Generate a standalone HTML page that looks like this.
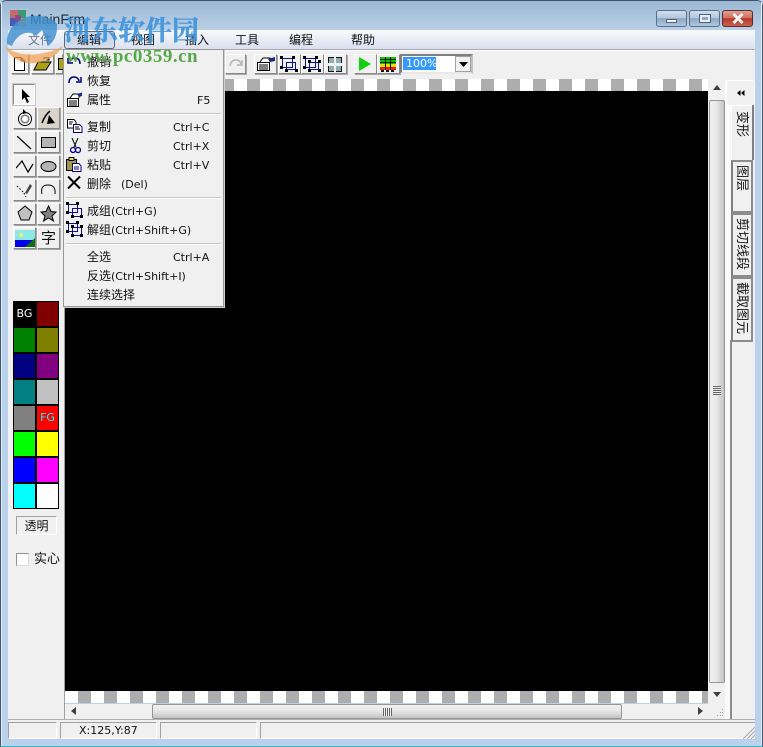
<!DOCTYPE html>
<html><head><meta charset="utf-8"><style>
html,body{margin:0;padding:0;width:763px;height:747px;overflow:hidden;background:#b9d1ea}
body{position:relative;font:12px/14px "Liberation Sans","WenQuanYi Zen Hei","Noto Sans CJK SC",sans-serif;color:#111}
div,span,svg{position:absolute;box-sizing:border-box}
i{font:11px/14px "DejaVu Sans",sans-serif}
.t{width:23px;height:22px;background:#f0f0f0;border:1px solid;border-color:#fff #8a8a8a #8a8a8a #fff;box-shadow:1px 1px 0 #a8a8a8}
.m{white-space:nowrap;line-height:14px}
.sep{left:66px;width:155px;height:2px;background:#c6c6c6;border-bottom:1px solid #fff}
.c{width:21px;height:24px;font:11px/24px "DejaVu Sans",sans-serif;text-align:center}
.tab{left:731px;width:22px;background:#f0f0f0;border:2px solid #8c8c8c;border-left-color:#808080;border-bottom-color:#8c8c8c}
.v{writing-mode:vertical-rl;text-orientation:sideways;white-space:nowrap;left:3px;line-height:14px;font-size:13px}
.st{top:722px;height:17px;background:#f0f0f0;border:1px solid;border-color:#a0a0a0 #fff #fff #a0a0a0}
</style></head><body>

<!-- window frame -->
<div style="left:0;top:0;width:763px;height:747px;background:#b9d1ea;border:1px solid #40566c;border-bottom-color:#38b4c8;border-radius:6px 6px 0 0"></div>
<div style="left:1px;top:1px;width:761px;height:29px;background:linear-gradient(#9cb8d4,#b9cfe6);border-radius:5px 5px 0 0"></div>
<div style="left:1px;top:2px;width:1px;height:744px;background:#e4eef8"></div>
<div style="left:761px;top:2px;width:1px;height:744px;background:#e4eef8"></div>

<!-- title -->
<svg style="left:10px;top:10px" width="16" height="16"><rect width="16" height="16" fill="#c46a6a"/><rect x="8" width="8" height="8" fill="#3a9a72"/><rect y="8" width="8" height="8" fill="#4a5ab0"/><rect x="8" y="8" width="8" height="8" fill="#d0a050"/><rect x="5" y="5" width="6" height="6" fill="#8a4a90"/></svg>
<div class="m" style="left:30px;top:11px;font-size:14px;color:#1a2a3a;height:16px;line-height:16px">MainFrm</div>
<div style="left:656px;top:10px;width:31px;height:17px;border:1px solid #5a6e86;border-radius:3px;background:linear-gradient(#d0deec 0,#b4c8de 45%,#8ca8c6 50%,#b0c8e0 100%)"><div style="left:9px;top:8px;width:11px;height:4px;background:#f4f4f4;border:1px solid #50627a"></div></div>
<div style="left:689px;top:10px;width:31px;height:17px;border:1px solid #5a6e86;border-radius:3px;background:linear-gradient(#d0deec 0,#b4c8de 45%,#8ca8c6 50%,#b0c8e0 100%)"><div style="left:9px;top:3px;width:12px;height:9px;background:#e8eef4;border:1px solid #50627a"><div style="left:2px;top:2px;width:6px;height:3px;background:#8fa6be;border:0"></div></div></div>
<div style="left:722px;top:10px;width:31px;height:17px;border:1px solid #5c2a30;border-radius:3px;background:linear-gradient(#e0a090 0,#d07060 45%,#b83828 50%,#c86050 100%)"><svg style="left:9px;top:2px" width="12" height="11"><path d="M1.500 1 L10.500 10 M10.500 1 L1.500 10" stroke="#f4f4f4" stroke-width="3"/></svg></div>

<!-- menu bar -->
<div style="left:8px;top:30px;width:747px;height:20px;background:linear-gradient(#f8fafd,#d8deee)"></div>
<div style="left:8px;top:49px;width:747px;height:2px;background:#a8a8b0;border-bottom:1px solid #fff"></div>
<div class="m" style="left:28px;top:33px;color:#6a7a8a">文件</div>
<div style="left:64px;top:31px;width:51px;height:18px;border:1px solid #5a6a7a;border-radius:3px;background:linear-gradient(#c4d4e8,#d4dcec)"></div>
<div class="m" style="left:77px;top:33px">编辑</div>
<div class="m" style="left:131px;top:33px">视图</div>
<div class="m" style="left:185px;top:33px">插入</div>
<div class="m" style="left:235px;top:33px">工具</div>
<div class="m" style="left:289px;top:33px">编程</div>
<div class="m" style="left:351px;top:33px">帮助</div>

<!-- toolbar -->
<div style="left:8px;top:51px;width:747px;height:28px;background:#f0f0f0"></div>
<div class="t" style="left:11px;top:54px;width:18px;height:20px"></div>
<svg style="left:13px;top:57px" width="13" height="15"><path d="M1.500 .5 H8 L11.500 4 V13.500 H1.500 Z M8 .5 V4 H11.500" fill="#fff" stroke="#000"/></svg>
<div class="t" style="left:31px;top:54px;height:20px"></div>
<svg style="left:33px;top:56px" width="20" height="16"><path d="M1 14 L5 6 H18 L13 14 Z" fill="#a8a018" stroke="#000"/><path d="M10 3 Q13 0 16 3 M16 1 V4 H13" fill="none" stroke="#000"/></svg>
<div class="t" style="left:55px;top:54px;width:8px;height:20px"></div>
<div style="left:58px;top:58px;width:5px;height:12px;background:#a8a018;border:1px solid #000;border-right:0"></div>
<div class="t" style="left:225px;top:54px;height:20px;width:21px"></div>
<svg style="left:228px;top:58px" width="16" height="12"><path d="M2 8 Q3 2 8 2 Q12 2 13 6 M14 2 V7 H9" fill="none" stroke="#b4b4b4" stroke-width="1.400"/></svg>
<div class="t" style="left:254px;top:54px;height:20px"></div>
<svg style="left:256px;top:56px" width="20" height="16"><path d="M1.500 6.500 H13.500 V14.500 H1.500 Z M3 9 H12 M3 11 H12 M3 13 H12 M4 6 L7 2 H14 V6" fill="#fff" stroke="#000"/><path d="M12 3 L19 1 V5 L14 6 Z" fill="#1a2a80"/></svg>
<div class="t" style="left:278px;top:54px;height:20px"></div>
<svg style="left:280px;top:56px" width="18" height="16"><path d="M2.500 2.500 H12.500 V11.500 H2.500 Z M6.500 6.500 H15.500 V13.500 H6.500 Z" fill="none" stroke="#101088"/><path d="M0 0h3v3H0zM12 0h3v3h-3zM0 10h3v3H0zM15 13h3v3h-3zM5 13h3v3H5z"/></svg>
<div class="t" style="left:301px;top:54px;height:20px"></div>
<svg style="left:303px;top:56px" width="19" height="16"><path d="M2.500 2.500 H12.500 V11.500 H2.500 Z M6.500 6.500 H15.500 V13.500 H6.500 Z" fill="none" stroke="#101088"/><path d="M0 0h3v3H0zM12 0h3v3h-3zM0 10h3v3H0zM15 4h3v3h-3zM15 13h3v3h-3zM5 13h3v3H5zM5 4h3v3H5z"/></svg>
<div class="t" style="left:324px;top:54px;height:20px"></div>
<svg style="left:327px;top:57px" width="16" height="15"><path d="M1 0h6v6H1zM9 0h6v6H9zM1 9h6v6H1zM9 9h6v6H9z" fill="#8cb0b0"/><path d="M1 0h1v6H1zM14 0h1v6h-1zM1 9h1v6H1zM14 9h1v6h-1zM2 0h5v1H2zM9 0h5v1H9zM2 14h5v1H2zM9 14h5v1H9z" fill="#111"/></svg>
<div class="t" style="left:354px;top:54px;height:20px"></div>
<svg style="left:359px;top:57px" width="13" height="14"><path d="M0 0 L12 7 L0 14 Z" fill="#10d010"/></svg>
<div class="t" style="left:377px;top:54px;height:20px"></div>
<svg style="left:380px;top:57px" width="16" height="15"><rect width="16" height="7" fill="#00c800"/><rect y="7" width="16" height="3" fill="#e8e000"/><rect y="10" width="16" height="3" fill="#e02020"/><path d="M1 13h3v2H1zM6 13h3v2H6zM11 13h3v2h-3zM5 0h1v13H5zM10 0h1v13h-1zM0 2h16v1H0zM0 5h16v1H0z" fill="#111"/></svg>
<div style="left:400px;top:54px;width:73px;height:20px;background:#fff;border:2px solid;border-color:#808080 #c0c0c0 #e8e8e8 #808080"></div>
<div style="left:403px;top:57px;width:33px;height:13px;background:#3399ff;color:#fff;font:11px/13px 'DejaVu Sans',sans-serif;padding-left:3px;white-space:nowrap;overflow:hidden">100%</div>
<div style="left:455px;top:56px;width:16px;height:16px;background:#f0f0f0;border:1px solid #a0a0a0"></div>
<svg style="left:459px;top:62px" width="10" height="5"><path d="M0 0H9L4.500 5Z" fill="#000"/></svg>

<!-- canvas -->
<div style="left:65px;top:79px;width:644px;height:12px;background:repeating-linear-gradient(90deg,#adadad 0 13px,#fff 13px 26px)"></div>
<div style="left:65px;top:91px;width:643px;height:600px;background:#000"></div>
<div style="left:65px;top:691px;width:644px;height:12px;background:repeating-linear-gradient(90deg,#fff 0 13px,#adadad 13px 26px)"></div>
<div style="left:708px;top:79px;width:1px;height:625px;background:#f0f0f0"></div>

<!-- vertical scrollbar -->
<div style="left:709px;top:79px;width:17px;height:641px;background:#f0f0f0"></div>
<svg style="left:713px;top:85px" width="9" height="5"><path d="M0 5H8L4 0Z" fill="#404040"/></svg>
<svg style="left:713px;top:692px" width="9" height="5"><path d="M0 0H8L4 5Z" fill="#404040"/></svg>
<div style="left:709px;top:100px;width:16px;height:583px;background:linear-gradient(90deg,#f0f0f0,#e8e8e8 45%,#c4c4c4);border:1px solid #979797;border-radius:2px"></div>
<div style="left:713px;top:386px;width:8px;height:9px;background:repeating-linear-gradient(#666 0 1px,#eee 1px 2px)"></div>

<!-- horizontal scrollbar -->
<div style="left:65px;top:704px;width:644px;height:15px;background:#f0f0f0"></div>
<svg style="left:71px;top:707px" width="5" height="9"><path d="M5 0V8L0 4Z" fill="#404040"/></svg>
<svg style="left:698px;top:707px" width="5" height="9"><path d="M0 0V8L5 4Z" fill="#404040"/></svg>
<div style="left:152px;top:704px;width:470px;height:15px;background:linear-gradient(#f0f0f0,#e8e8e8 45%,#c4c4c4);border:1px solid #979797;border-radius:2px"></div>
<div style="left:383px;top:708px;width:9px;height:8px;background:repeating-linear-gradient(90deg,#666 0 1px,#eee 1px 2px)"></div>
<svg style="left:713px;top:709px" width="11" height="9"><path d="M9 0h1v1H9zM7 3h1v1H7zM9 3h1v1H9zM4 6h1v1H4zM7 6h1v1H7zM9 6h1v1H9z" fill="#a0a0a0"/></svg>

<!-- left panel -->
<div style="left:8px;top:79px;width:57px;height:641px;background:#f0f0f0;border-right:1px solid #a0a0a0;border-bottom:1px solid #a0a0a0"></div>
<div style="left:13px;top:84px;width:22px;height:21px;background:#f6f6f6;border:1px solid;border-color:#8a8a8a #fff #fff #8a8a8a;box-shadow:0 0 0 1px #c8c8c8"></div>
<svg style="left:21px;top:89px" width="11" height="15"><path d="M1 0 L1 11 L3.500 8.500 L6 14 L8 13 L5.500 8 L9 8 Z" fill="#000"/></svg>
<div class="t" style="left:13px;top:107px"></div>
<svg style="left:16px;top:109px" width="18" height="18"><circle cx="9" cy="10" r="6.500" fill="#fff" stroke="#000"/><circle cx="9" cy="10" r="3.800" fill="#fff" stroke="#777" stroke-width="1.500"/><path d="M7 0 L11 4 L7 5 Z" fill="#000"/></svg>
<div class="t" style="left:37px;top:107px;background:#d8d4cc"></div>
<svg style="left:40px;top:109px" width="17" height="18"><path d="M2 14 Q5 6 10 2" fill="none" stroke="#000" stroke-width="1.500"/><path d="M9 6 L7 15 L15 14 Z" fill="#000"/></svg>
<div class="t" style="left:13px;top:131px"></div>
<svg style="left:17px;top:136px" width="15" height="14"><path d="M0 0 L14 13" stroke="#000" stroke-width="1.200"/></svg>
<div class="t" style="left:37px;top:131px"></div>
<div style="left:41px;top:137px;width:15px;height:11px;background:#b4b4b4;border:1px solid #000"></div>
<div class="t" style="left:13px;top:155px"></div>
<svg style="left:16px;top:160px" width="18" height="14"><path d="M0 8 L6 1 L12 12 L17 4" fill="none" stroke="#000" stroke-width="1.200"/></svg>
<div class="t" style="left:37px;top:155px"></div>
<svg style="left:40px;top:160px" width="17" height="13"><ellipse cx="8.500" cy="6.500" rx="7.500" ry="5" fill="#b4b4b4" stroke="#000"/></svg>
<div class="t" style="left:13px;top:179px"></div>
<svg style="left:16px;top:181px" width="18" height="18"><path d="M9 12 L14 3 L16 5 L11 13 Z" fill="#444"/><path d="M1 5 L8 12 M8 12 L10 16" stroke="#000" stroke-dasharray="1.500 2"/></svg>
<div class="t" style="left:37px;top:179px"></div>
<svg style="left:40px;top:183px" width="17" height="15"><path d="M2 11 Q0 2 8 2 Q16 2 15 11" fill="none" stroke="#000"/></svg>
<div class="t" style="left:13px;top:203px"></div>
<svg style="left:16px;top:205px" width="18" height="18"><path d="M9 1 L16 7 L13 15 H5 L2 7 Z" fill="#c0c0c0" stroke="#000"/></svg>
<div class="t" style="left:37px;top:203px"></div>
<svg style="left:40px;top:205px" width="17" height="17"><path d="M8.500 1 L11 6.500 L16 7 L12 11 L13.500 16 L8.500 13 L3.500 16 L5 11 L1 7 L6 6.500 Z" fill="#808080" stroke="#000"/></svg>
<div class="t" style="left:13px;top:227px"></div>
<svg style="left:15px;top:230px" width="20" height="17"><rect width="20" height="17" fill="#8ce8e8"/><rect y="10" width="20" height="7" fill="#0000e8"/><path d="M10 17 L20 8 V17 Z" fill="#107010"/><circle cx="6" cy="5" r="2" fill="#f8f060"/></svg>
<div class="t" style="left:37px;top:227px"></div>
<div class="m" style="left:41px;top:230px;font-size:15px;line-height:17px">字</div>

<!-- palette -->
<div style="left:13px;top:301px;width:46px;height:208px;background:#000"></div>
<div class="c" style="left:14px;top:302px;background:#000;color:#fff">BG</div><div class="c" style="left:37px;top:302px;background:#800000"></div>
<div class="c" style="left:14px;top:328px;background:#008000"></div><div class="c" style="left:37px;top:328px;background:#808000"></div>
<div class="c" style="left:14px;top:354px;background:#000080"></div><div class="c" style="left:37px;top:354px;background:#800080"></div>
<div class="c" style="left:14px;top:380px;background:#008080"></div><div class="c" style="left:37px;top:380px;background:#c0c0c0"></div>
<div class="c" style="left:14px;top:406px;background:#808080"></div><div class="c" style="left:37px;top:406px;background:#f00;color:#0ff">FG</div>
<div class="c" style="left:14px;top:432px;background:#0f0"></div><div class="c" style="left:37px;top:432px;background:#ff0"></div>
<div class="c" style="left:14px;top:458px;background:#00f"></div><div class="c" style="left:37px;top:458px;background:#f0f"></div>
<div class="c" style="left:14px;top:484px;background:#0ff"></div><div class="c" style="left:37px;top:484px;background:#fff"></div>

<div style="left:16px;top:516px;width:41px;height:19px;border:1px solid;border-color:#a0a0a0 #fff #fff #a0a0a0;text-align:center;line-height:18px">透明</div>
<div style="left:16px;top:553px;width:13px;height:13px;background:#fff;border:1px solid;border-color:#909090 #ddd #ddd #909090"></div>
<div class="m" style="left:34px;top:552px;font-size:13px">实心</div>

<!-- right panel -->
<div style="left:726px;top:79px;width:29px;height:641px;background:#f0f0f0"></div>
<div style="left:725px;top:79px;width:1px;height:641px;background:#fafafa"></div>
<div style="left:726px;top:80px;width:29px;height:26px;background:#f0f0f0;border:1px solid #fff"></div>
<svg style="left:737px;top:90px" width="8" height="7"><path d="M3.500 0V6L0 3ZM7.500 0V6L4 3Z" fill="#000"/></svg>
<div style="left:726px;top:106px;width:5px;height:614px;background:#fafafa"></div>
<div style="left:730px;top:340px;width:2px;height:380px;background:#8c8c8c"></div>
<div style="left:731px;top:105px;width:23px;height:55px;background:#f0f0f0;border-top:1px solid #fff;border-left:1px solid #fff"></div>
<div style="left:752px;top:105px;width:2px;height:55px;background:#808080"></div>
<div class="v" style="left:735px;top:111px">变形</div>
<div class="tab" style="top:160px;height:53px"><div class="v" style="left:2px;top:3px">图层</div></div>
<div class="tab" style="top:213px;height:64px"><div class="v" style="left:2px;top:3px">剪切线段</div></div>
<div class="tab" style="top:277px;height:65px"><div class="v" style="left:2px;top:3px">截取图元</div></div>

<!-- status bar -->
<div style="left:8px;top:719px;width:747px;height:20px;background:#f0f0f0;border-top:1px solid #b0b0b0"></div>
<div class="st" style="left:8px;width:49px"></div>
<div class="st" style="left:60px;width:97px"><span class="m" style="left:18px;top:1px;color:#111;font:11px/14px 'DejaVu Sans',sans-serif">X:125,Y:87</span></div>
<div class="st" style="left:160px;width:97px"></div>
<div class="st" style="left:260px;width:495px;border-right:0"></div>
<svg style="left:743px;top:727px" width="12" height="12"><path d="M0 12L12 0M4 12L12 4M8 12L12 8" stroke="#a8a8a8"/></svg>

<!-- dropdown menu -->
<div style="left:63px;top:49px;width:161px;height:258px;background:#f0f0f0;border:1px solid #979797;box-shadow:1px 1px 0 #d0d0d0"></div>
<svg style="left:67px;top:56px" width="16" height="10"><path d="M13 8 Q13 2 8 2 Q4 2 3 6 M1 2 V7 H6" fill="none" stroke="#000080" stroke-width="1.500"/></svg>
<svg style="left:67px;top:75px" width="15" height="10"><path d="M2 8 Q2 2 7 2 Q11 2 12 6 M14 2 V7 H9" fill="none" stroke="#000080" stroke-width="1.500"/></svg>
<svg style="left:66px;top:92px" width="17" height="15"><path d="M1.500 6.500 H12.500 V14.500 H1.500 Z M3 9 H11 M3 11 H11 M3 13 H11 M4 6 L7 2 H13 V6" fill="#fff" stroke="#000"/><path d="M11 2 L16 .5 V4 L13 5 Z" fill="#1a2a80"/></svg>
<svg style="left:67px;top:119px" width="16" height="14"><path d="M.5 .5H7L9 3V9H.5Z" fill="#fff" stroke="#000"/><path d="M6.500 5.500H12.500L15 8V13.500H6.500Z" fill="#fff" stroke="#000080"/><path d="M2 3H6M2 5H5M8 8H12M8 10H13" stroke="#000"/></svg>
<svg style="left:70px;top:138px" width="11" height="16"><path d="M2 0 L6 9 M8 0 L4 9" stroke="#000"/><circle cx="3" cy="12" r="2.500" fill="none" stroke="#000080" stroke-width="1.300"/><circle cx="8" cy="12" r="2.500" fill="none" stroke="#000080" stroke-width="1.300"/></svg>
<svg style="left:66px;top:157px" width="16" height="15"><rect x=".5" y="2.500" width="10" height="11" fill="#a09850" stroke="#000"/><rect x="3" y=".5" width="5" height="3" fill="#e0e060" stroke="#000"/><path d="M6.500 6.500H13L15 9V14.500H6.500Z" fill="#fff" stroke="#000080"/><path d="M8 10H13M8 12H13" stroke="#000080"/></svg>
<svg style="left:67px;top:176px" width="14" height="13"><path d="M1 0.500 L13 12.500 M13 .5 L1 12.500" stroke="#000" stroke-width="2"/></svg>
<svg style="left:66px;top:202px" width="17" height="16"><path d="M2.500 2.500 H11.500 V10.500 H2.500 Z M6.500 6.500 H15.500 V14.500 H6.500 Z" fill="none" stroke="#101088"/><path d="M0 0h3v3H0zM10 0h3v3h-3zM0 9h3v3H0zM14 13h3v3h-3zM5 13h3v3H5z"/></svg>
<svg style="left:66px;top:221px" width="17" height="16"><path d="M2.500 2.500 H11.500 V10.500 H2.500 Z M6.500 6.500 H15.500 V14.500 H6.500 Z" fill="none" stroke="#101088"/><path d="M0 0h3v3H0zM10 0h3v3h-3zM0 9h3v3H0zM14 4h3v3h-3zM14 13h3v3h-3zM5 13h3v3H5zM5 4h3v3H5z"/></svg>
<div class="sep" style="top:113px"></div>
<div class="sep" style="top:197px"></div>
<div class="sep" style="top:243px"></div>
<div class="m" style="left:87px;top:55px">撤销</div>
<div class="m" style="left:87px;top:74px">恢复</div>
<div class="m" style="left:87px;top:93px">属性</div><div class="m" style="left:197px;top:93px"><i>F5</i></div>
<div class="m" style="left:87px;top:120px">复制</div><div class="m" style="left:173px;top:120px"><i>Ctrl+C</i></div>
<div class="m" style="left:87px;top:139px">剪切</div><div class="m" style="left:173px;top:139px"><i>Ctrl+X</i></div>
<div class="m" style="left:87px;top:158px">粘贴</div><div class="m" style="left:173px;top:158px"><i>Ctrl+V</i></div>
<div class="m" style="left:87px;top:177px">删除&nbsp;&nbsp;&nbsp;<i>(Del)</i></div>
<div class="m" style="left:87px;top:204px">成组<i>(Ctrl+G)</i></div>
<div class="m" style="left:87px;top:223px">解组<i>(Ctrl+Shift+G)</i></div>
<div class="m" style="left:87px;top:250px">全选</div><div class="m" style="left:173px;top:250px"><i>Ctrl+A</i></div>
<div class="m" style="left:87px;top:269px">反选<i>(Ctrl+Shift+I)</i></div>
<div class="m" style="left:87px;top:288px">连续选择</div>

<!-- watermark -->
<svg style="left:0;top:8px" width="70" height="60"><path d="M7 36 C6 18 22 6 40 8 C48 9 54 12 57 16 C58 26 54 34 48 38 L42 22 L36 28 C30 22 18 24 12 38 Z" fill="#3f8fd0" opacity=".82"/><path d="M5 38 C14 62 50 60 63 38 C50 46 20 52 5 38 Z" fill="#f0a050" opacity=".72"/></svg>
<div class="m" style="left:64px;top:13px;height:32px;font:bold 27px/32px 'Noto Serif CJK SC','Liberation Serif',serif;color:#3d94dc;opacity:.9;-webkit-text-stroke:.4px #3d94dc">河东软件园</div>
<div class="m" style="left:66px;top:47px;height:20px;font:bold 19px/20px 'Liberation Serif',serif;color:#57a84a;letter-spacing:.5px">www.pc0359.cn</div>
</body></html>
